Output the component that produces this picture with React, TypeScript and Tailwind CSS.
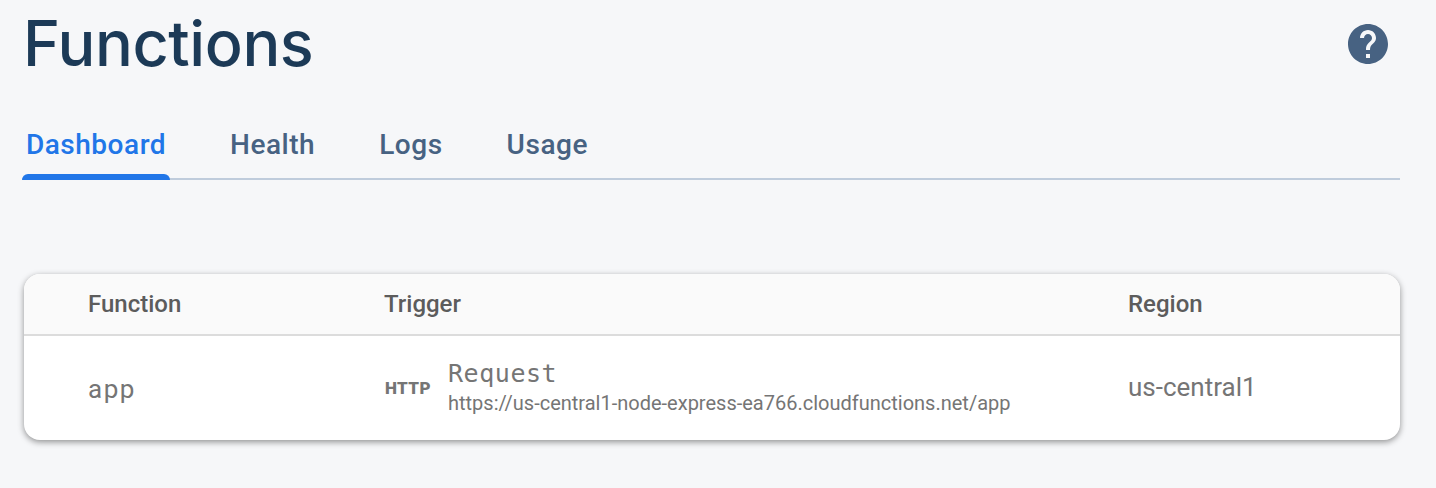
const tabs = ['Health', 'Logs', 'Usage'];

export default function App() {
  return (
    <main className="h-[488px] w-[1436px] overflow-hidden bg-[#f6f7f9] pl-6 pr-9 font-[Roboto,sans-serif]">
      <header className="flex h-[112px] items-start justify-between pr-2">
        <h1 className="-ml-px font-[Inter,sans-serif] text-[63px] leading-[87px] font-medium tracking-[-0.45px] text-[#1c3a57]">Functions</h1>
        <svg className="mt-5 h-12 w-12" viewBox="0 0 24 24" fill="#476282">
          <path d="M12 2C6.48 2 2 6.48 2 12s4.48 10 10 10 10-4.48 10-10S17.52 2 12 2zm1 17h-2v-2h2v2zm2.07-7.75l-.9.92C13.45 12.9 13 13.5 13 15h-2v-.5c0-1.1.45-2.1 1.17-2.83l1.24-1.26c.37-.36.59-.86.59-1.41 0-1.1-.9-2-2-2s-2 .9-2 2H8c0-2.21 1.79-4 4-4s4 1.79 4 4c0 .88-.36 1.68-.93 2.25z" />
        </svg>
      </header>
      <nav className="-ml-0.5 flex h-[68px] gap-[64px] border-b-2 border-[#bfccdc] text-[28px] font-medium tracking-[0.53px] text-[#476282]">
        <div className="-mr-1 flex h-[68px] w-[148px] flex-col justify-between text-center text-[#2176e8]">
          <span className="leading-[66px]">Dashboard</span>
          <span className="-mt-1 h-1.5 shrink-0 rounded-t-md bg-[#2176e8]" />
        </div>
        {tabs.map((t) => <span key={t} className="leading-[66px]">{t}</span>)}
      </nav>
      <section className="mt-[94px] h-[166px] overflow-hidden rounded-2xl bg-white text-[#757575] shadow-[0_2px_6px_rgba(0,0,0,0.42)]">
        <div className="grid h-[62px] grid-cols-[296px_744px_1fr] items-center border-b-2 border-[#dcdcdc] bg-[#fafafa] pl-16 text-2xl font-medium text-[#5c5c5c]">
          <span>Function</span><span>Trigger</span><span>Region</span>
        </div>
        <div className="grid h-[104px] grid-cols-[296px_744px_1fr] items-center pl-16">
          <span className="pt-0.5 text-[26px] tracking-[1.5px]">app</span>
          <div className="flex items-center">
            <span className="w-12 pl-px text-[17px] leading-6 font-black tracking-[0.4px]">HTTP</span>
            <div className="-mt-0.5 ml-4">
              <div className="-mb-px pt-px font-['DejaVu_Sans_Mono',monospace] text-[25px] leading-8 tracking-[0.55px]">Request</div>
              <div className="text-[20px] leading-7">https://us-central1-node-express-ea766.cloudfunctions.net/app</div>
            </div>
          </div>
          <span className="-mt-0.5 text-[26px]">us-central1</span>
        </div>
      </section>
    </main>
  );
}
